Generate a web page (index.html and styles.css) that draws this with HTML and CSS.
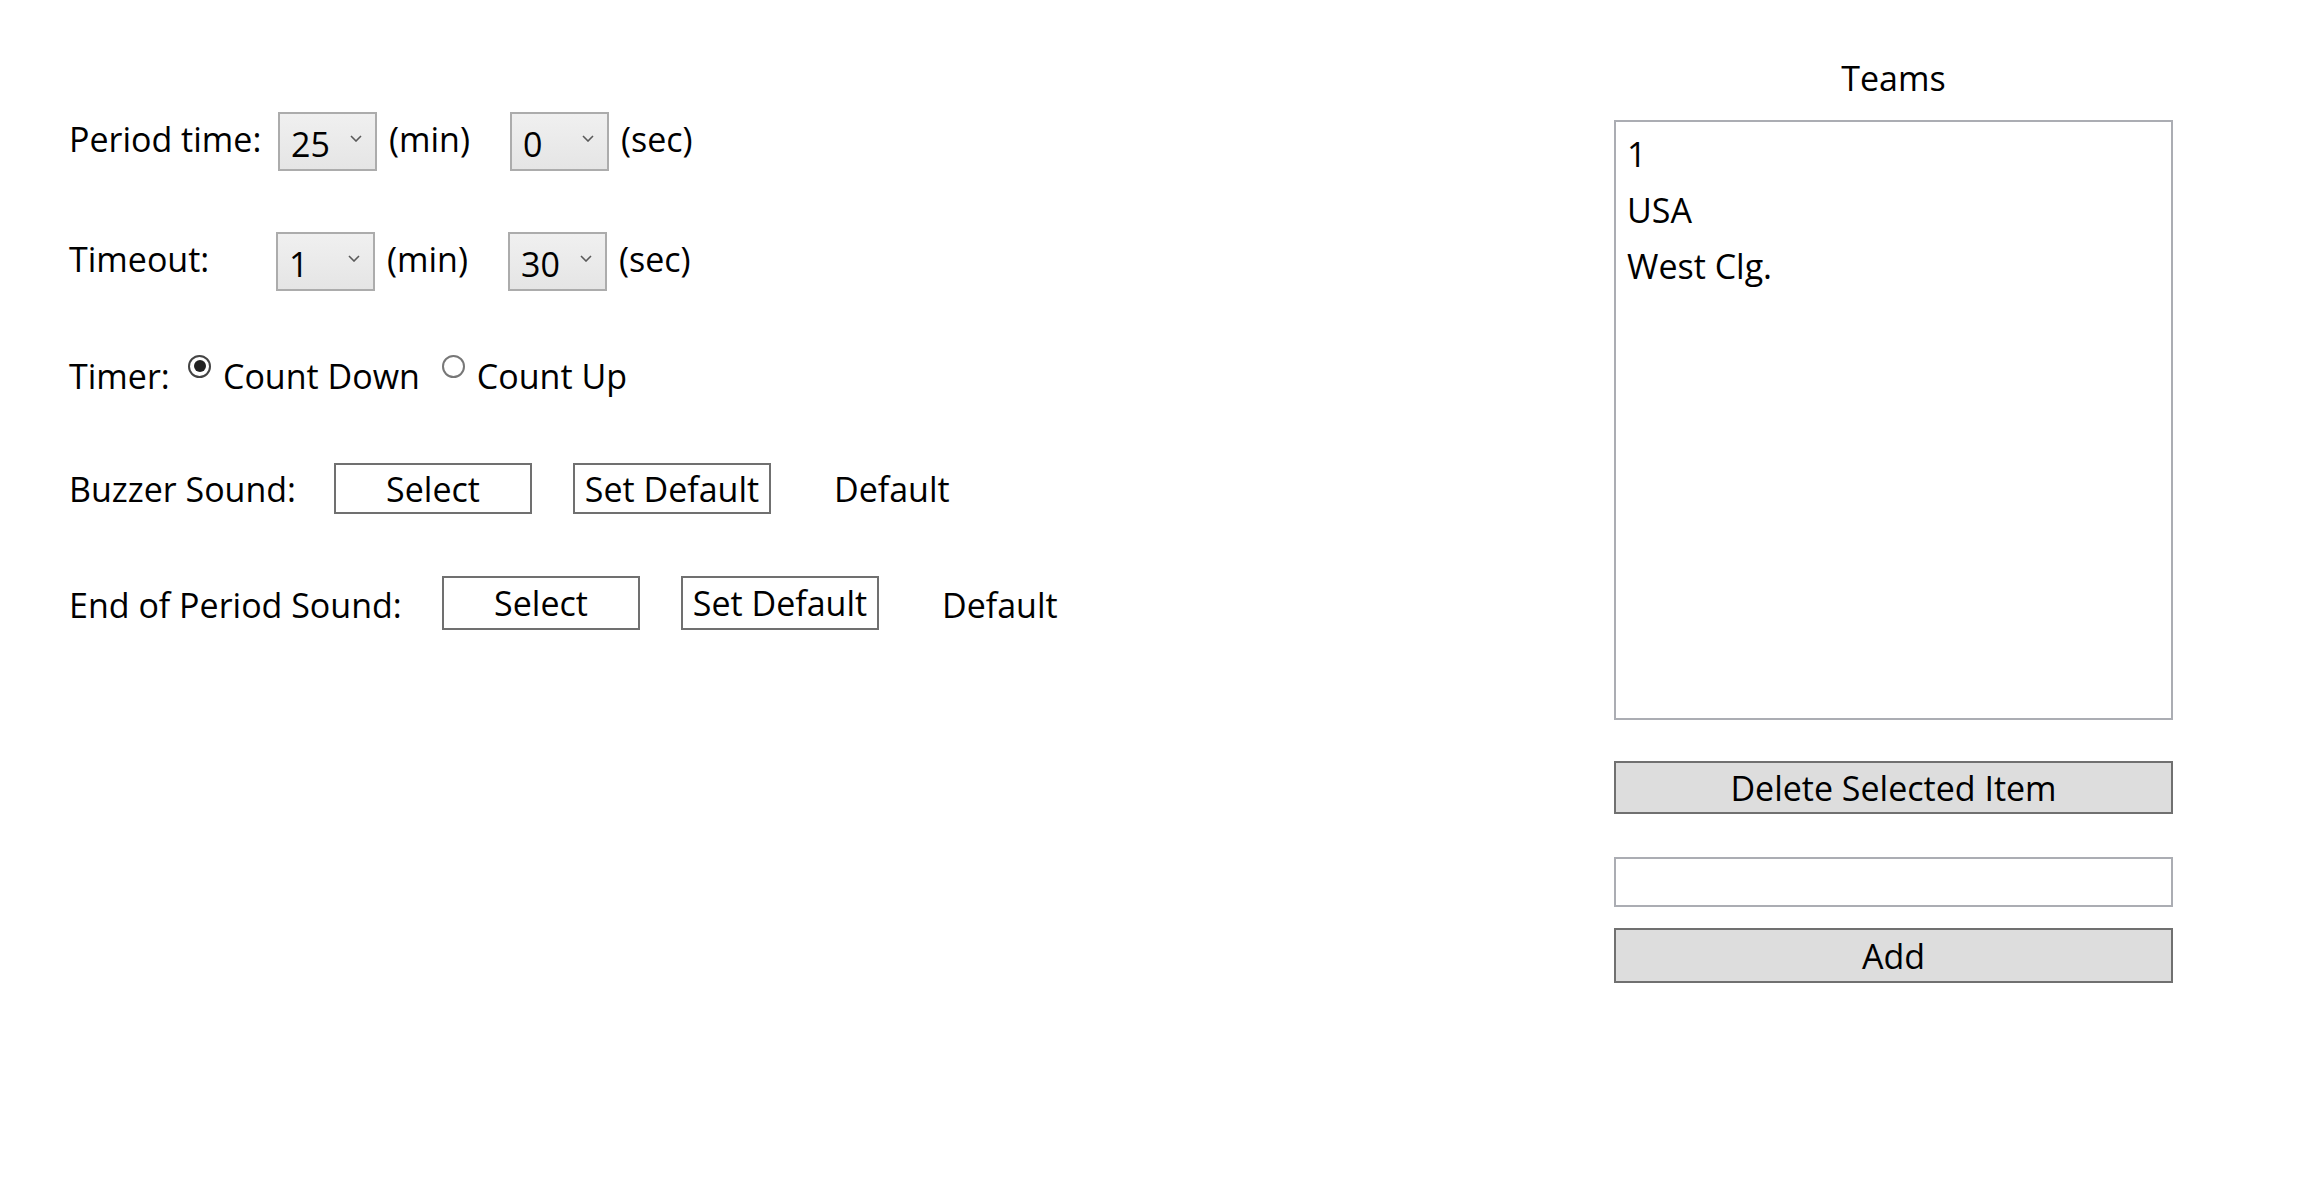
FILE: index.html
```html
<!DOCTYPE html>
<html lang="en">
<head>
    <meta charset="UTF-8">
    <title>Game Settings</title>
    <link rel="stylesheet" href="styles.css">
</head>
<body>
    <div class="window">
        <div class="settings">
            <div class="row row-time row-period">
                <span class="label label-period">Period time:</span>
                <div class="combo"><span>25</span><svg class="chevron" viewBox="0 0 12 7"><polyline points="1,1 6,6 11,1"/></svg></div>
                <span class="unit unit-min">(min)</span>
                <div class="combo"><span>0</span><svg class="chevron" viewBox="0 0 12 7"><polyline points="1,1 6,6 11,1"/></svg></div>
                <span class="unit">(sec)</span>
            </div>

            <div class="row row-time row-timeout">
                <span class="label label-timeout">Timeout:</span>
                <div class="combo"><span>1</span><svg class="chevron" viewBox="0 0 12 7"><polyline points="1,1 6,6 11,1"/></svg></div>
                <span class="unit unit-min">(min)</span>
                <div class="combo"><span>30</span><svg class="chevron" viewBox="0 0 12 7"><polyline points="1,1 6,6 11,1"/></svg></div>
                <span class="unit">(sec)</span>
            </div>

            <div class="row row-timer">
                <span class="label label-timer">Timer:</span>
                <label class="radio checked"><span class="dot"></span>Count Down</label>
                <label class="radio"><span class="dot"></span>Count Up</label>
            </div>

            <div class="row row-buzzer">
                <span class="label label-buzzer">Buzzer Sound:</span>
                <button class="btn">Select</button>
                <button class="btn">Set Default</button>
                <span class="sound-name">Default</span>
            </div>

            <div class="row row-end">
                <span class="label label-end">End of Period Sound:</span>
                <button class="btn">Select</button>
                <button class="btn">Set Default</button>
                <span class="sound-name">Default</span>
            </div>
        </div>

        <div class="teams">
            <div class="teams-title">Teams</div>
            <ul class="team-list">
                <li>1</li>
                <li>USA</li>
                <li>West Clg.</li>
            </ul>
            <button class="btn-gray btn-delete">Delete Selected Item</button>
            <input type="text" class="team-input">
            <button class="btn-gray btn-add">Add</button>
        </div>
    </div>
</body>
</html>
```

FILE: styles.css
```css
* {
    margin: 0;
    padding: 0;
    box-sizing: border-box;
}

body {
    font-family: "Open Sans", "Noto Sans", sans-serif;
    font-size: 34px;
    color: #000;
    background: #fff;
    width: 2315px;
    height: 1187px;
    overflow: hidden;
}

.window {
    display: flex;
    padding-left: 69px;
}

.settings {
    flex: 0 0 1545px;
    padding-top: 112px;
}

.row {
    display: flex;
    align-items: center;
    white-space: nowrap;
}

.row-period { height: 59px; }
.row-timeout { height: 59px; margin-top: 61px; }
.row-timer { height: 40px; margin-top: 65px; }
.row-buzzer { height: 51px; margin-top: 67px; }
.row-end { height: 54px; margin-top: 62px; }

.row-time .label,
.row-time .unit {
    margin-bottom: 6px;
}

.row-end .sound-name,
.row-end .label {
    margin-top: 3px;
}

.label-period { width: 209px; }
.label-timeout { width: 207px; }
.label-timer { width: 119px; }
.label-buzzer { width: 265px; }
.label-end { width: 373px; }

.combo {
    width: 99px;
    height: 59px;
    border: 2px solid #acacac;
    background: linear-gradient(#f0f0f0, #e5e5e5);
    display: flex;
    align-items: center;
    justify-content: space-between;
    padding: 4px 13px 0 11px;
}

.chevron {
    width: 12px;
    height: 7px;
    margin-bottom: 10px;
    fill: none;
    stroke: #5a5a5a;
    stroke-width: 1.6;
}

.unit {
    margin-left: 12px;
}

.unit-min {
    width: 121px;
}

.radio {
    display: flex;
    align-items: center;
    margin-right: 22px;
}

.radio .dot {
    width: 23px;
    height: 23px;
    border: 2px solid #777;
    border-radius: 50%;
    margin: 0 12px 20px 0;
    display: flex;
    align-items: center;
    justify-content: center;
    background: #fff;
}

.radio.checked .dot {
    border-color: #444;
}

.radio.checked .dot::after {
    content: "";
    width: 12px;
    height: 12px;
    border-radius: 50%;
    background: #222;
}

.btn {
    width: 198px;
    height: 100%;
    border: 2px solid #707070;
    background: #fff;
    font: inherit;
    color: #000;
    margin-right: 41px;
}

.sound-name {
    margin-left: 22px;
}

.teams {
    flex: 0 0 559px;
    display: flex;
    flex-direction: column;
}

.teams-title {
    margin-top: 56px;
    height: 44px;
    line-height: 44px;
    text-align: center;
}

.team-list {
    list-style: none;
    margin-top: 20px;
    height: 600px;
    border: 2px solid #abadb3;
    padding: 4px 11px;
}

.team-list li {
    height: 56px;
    line-height: 56px;
}

.btn-gray {
    font: inherit;
    color: #000;
    background: #dddddd;
    border: 2px solid #707070;
}

.btn-delete {
    margin-top: 41px;
    height: 53px;
}

.team-input {
    margin-top: 43px;
    height: 50px;
    border: 2px solid #abadb3;
    font: inherit;
    outline: none;
}

.btn-add {
    margin-top: 21px;
    height: 55px;
}
```
